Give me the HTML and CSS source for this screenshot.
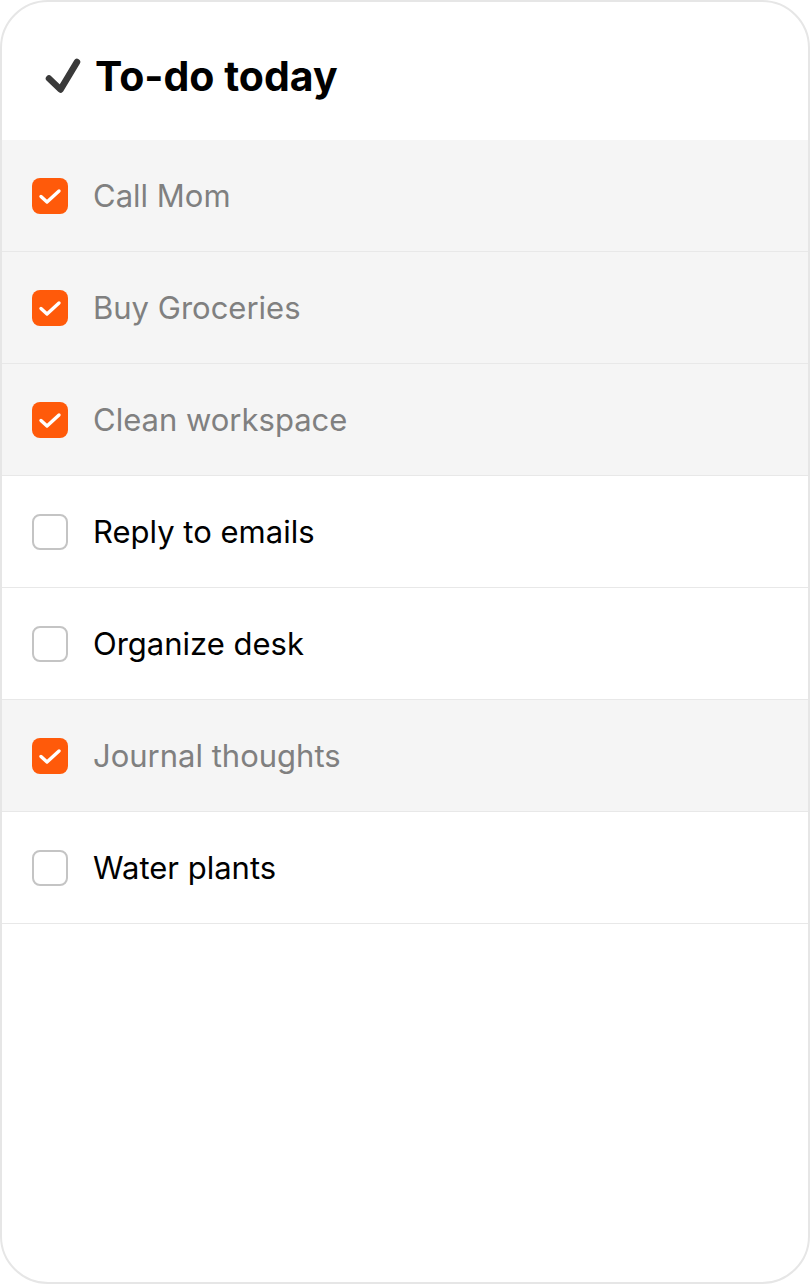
FILE: index.html
```html
<!DOCTYPE html>
<html lang="en">
<head>
<meta charset="utf-8">
<title>To-do today</title>
<link rel="stylesheet" href="styles.css">
</head>
<body>
<div class="card">
  <header class="head">
    <svg class="tick" viewBox="0 0 40 40" width="40" height="40" aria-hidden="true"><path d="M6 22.5L17.5 33.5L34 6" fill="none" stroke="#3a3a3a" stroke-width="6.5" stroke-linecap="round" stroke-linejoin="round"/></svg>
    <h1 class="title">To-do today</h1>
  </header>
  <ul class="list">
    <li class="item done"><span class="box"><svg viewBox="0 0 36 36" width="36" height="36"><path d="M9 18.5l6 5.5 12-11" fill="none" stroke="#fff" stroke-width="3.4" stroke-linecap="round" stroke-linejoin="round"/></svg></span><span class="label">Call Mom</span></li>
    <li class="item done"><span class="box"><svg viewBox="0 0 36 36" width="36" height="36"><path d="M9 18.5l6 5.5 12-11" fill="none" stroke="#fff" stroke-width="3.4" stroke-linecap="round" stroke-linejoin="round"/></svg></span><span class="label">Buy Groceries</span></li>
    <li class="item done"><span class="box"><svg viewBox="0 0 36 36" width="36" height="36"><path d="M9 18.5l6 5.5 12-11" fill="none" stroke="#fff" stroke-width="3.4" stroke-linecap="round" stroke-linejoin="round"/></svg></span><span class="label">Clean workspace</span></li>
    <li class="item"><span class="box"></span><span class="label">Reply to emails</span></li>
    <li class="item"><span class="box"></span><span class="label">Organize desk</span></li>
    <li class="item done"><span class="box"><svg viewBox="0 0 36 36" width="36" height="36"><path d="M9 18.5l6 5.5 12-11" fill="none" stroke="#fff" stroke-width="3.4" stroke-linecap="round" stroke-linejoin="round"/></svg></span><span class="label">Journal thoughts</span></li>
    <li class="item"><span class="box"></span><span class="label">Water plants</span></li>
  </ul>
</div>
</body>
</html>
```

FILE: styles.css
```css
* { box-sizing: border-box; }
html, body { margin: 0; padding: 0; background: #fff; }
body { font-family: Inter, "Noto Sans", "DejaVu Sans", sans-serif; }

.card {
  width: 810px;
  height: 1284px;
  border: 2px solid #e6e6e6;
  border-radius: 48px;
  background: #fff;
  overflow: hidden;
}

.head {
  height: 138px;
  display: flex;
  align-items: center;
  gap: 12px;
  padding-left: 41px;
  padding-top: 10px;
}

.tick { display: block; flex: none; }

.title {
  margin: 0;
  font-size: 41px;
  font-weight: 700;
  color: #000;
  line-height: 1;
}

.list { list-style: none; margin: 0; padding: 0; }

.item {
  height: 112px;
  display: flex;
  align-items: center;
  gap: 25px;
  padding-left: 30px;
  border-bottom: 1px solid #e8e8e8;
  font-size: 31px;
  color: #000;
}

.item.done { background: #f5f5f5; color: #808080; }

.box {
  width: 36px;
  height: 36px;
  border-radius: 8px;
  border: 2px solid #c4c4c4;
  background: #fff;
  flex: none;
  display: flex;
}

.item.done .box { background: #ff5a0a; border: none; }
.box svg { display: block; }
```
